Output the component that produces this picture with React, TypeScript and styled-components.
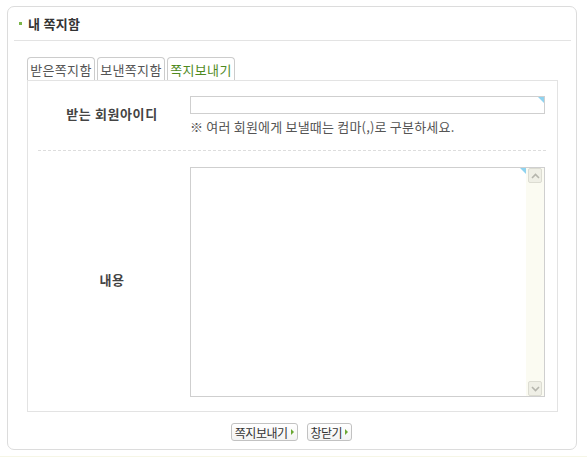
import styled, { createGlobalStyle } from 'styled-components';

const GlobalStyle = createGlobalStyle`
	html, body {
		margin: 0;
		padding: 0;
		background: #ffffff;
	}
	body {
		font-family: 'Noto Sans CJK KR', 'Noto Sans', sans-serif;
		font-size: 12px;
		color: #555555;
	}
`;

const tabs = ['받은쪽지함', '보낸쪽지함', '쪽지보내기'];

const App = () => {
	return (
		<>
			<GlobalStyle />
			<Page>
				<Box>
					<Header>
						<Bullet />
						<Title>내 쪽지함</Title>
					</Header>
					<Body>
						<Tabs>
							{tabs.map((t, i) => (
								<Tab key={t} isActive={i === 2}>
									{t}
								</Tab>
							))}
						</Tabs>
						<Panel>
							<Row divider>
								<Label>받는 회원아이디</Label>
								<Field>
									<InputBox>
										<Corner />
									</InputBox>
									<Help>※ 여러 회원에게 보낼때는 컴마(,)로 구분하세요.</Help>
								</Field>
							</Row>
							<Row>
								<Label>내용</Label>
								<Field>
									<AreaBox>
										<AreaText>
											<Corner />
										</AreaText>
										<ScrollBar>
											<ScrollBtn>
												<svg width="9" height="6" viewBox="0 0 9 6">
													<path d="M1 5 L4.5 1.5 L8 5" stroke="#b5b5ad" strokeWidth="1.6" fill="none" />
												</svg>
											</ScrollBtn>
											<ScrollBtn>
												<svg width="9" height="6" viewBox="0 0 9 6">
													<path d="M1 1 L4.5 4.5 L8 1" stroke="#b5b5ad" strokeWidth="1.6" fill="none" />
												</svg>
											</ScrollBtn>
										</ScrollBar>
									</AreaBox>
								</Field>
							</Row>
						</Panel>
						<Buttons>
							<Button>
								쪽지보내기
								<Arrow />
							</Button>
							<Button>
								창닫기
								<Arrow />
							</Button>
						</Buttons>
					</Body>
				</Box>
				<Strip />
			</Page>
		</>
	);
};

const Page = styled.div`
	width: 587px;
	padding-top: 6px;
`;

const Box = styled.div`
	width: 570px;
	height: 444px;
	box-sizing: border-box;
	margin-left: 7px;
	border: 1px solid #dcdcdc;
	border-radius: 7px;
	padding: 0 5px 0 6px;
`;

const Header = styled.div`
	height: 33px;
	display: flex;
	align-items: center;
	padding-left: 5px;
	border-bottom: 1px solid #e3e3e3;
`;

const Bullet = styled.span`
	width: 3px;
	height: 3px;
	background: #7bb54a;
	margin-right: 6px;
`;

const Title = styled.div`
	font-weight: 700;
	font-size: 13px;
	line-height: 14px;
	letter-spacing: 0.3px;
	color: #333333;
`;

const Body = styled.div`
	padding: 16px 13px 0 13px;
`;

const Tabs = styled.div`
	display: flex;
	gap: 2px;
`;

const Tab = styled.div<{ isActive: boolean }>`
	width: 68px;
	height: 23px;
	box-sizing: border-box;
	border: 1px solid #cccccc;
	border-bottom: none;
	border-radius: 4px 4px 0 0;
	display: flex;
	align-items: center;
	justify-content: center;
	font-size: 13px;
	letter-spacing: 0.3px;
	color: ${({ isActive }) => (isActive ? '#4f8a1e' : '#555555')};
	padding-top: 1px;
`;

const Panel = styled.div`
	border: 1px solid #e3e3e3;
	padding: 0 11px 0 10px;
`;

const Row = styled.div<{ divider?: boolean }>`
	display: grid;
	grid-template-columns: 152px 355px;
	align-items: center;
	padding: ${({ divider }) => (divider ? '15px 0 15px' : '16px 0 14px')};
	border-bottom: ${({ divider }) => (divider ? '1px dashed #dddddd' : 'none')};
`;

const Label = styled.div`
	text-align: center;
	font-weight: 700;
	font-size: 13px;
	line-height: 14px;
	letter-spacing: 0.6px;
	color: #444444;
	padding: 0 4px 4px 0;
`;

const Field = styled.div`
	display: flex;
	flex-direction: column;
`;

const InputBox = styled.div`
	position: relative;
	height: 18px;
	box-sizing: border-box;
	border: 1px solid #cfcfcf;
	background: #ffffff;
`;

const Corner = styled.span`
	position: absolute;
	top: 0;
	right: 0;
	width: 0;
	height: 0;
	border-top: 6px solid #8fd3f0;
	border-left: 6px solid transparent;
`;

const Help = styled.div`
	margin-top: 5px;
	font-size: 13px;
	line-height: 16px;
	color: #555555;
	letter-spacing: 0.2px;
`;

const AreaBox = styled.div`
	height: 230px;
	box-sizing: border-box;
	border: 1px solid #cfcfcf;
	display: flex;
`;

const AreaText = styled.div`
	position: relative;
	flex: 1;
`;

const ScrollBar = styled.div`
	width: 16px;
	background: #fbfbf2;
	display: flex;
	flex-direction: column;
	justify-content: space-between;
	align-items: center;
	padding: 0 1px 0 1px;
`;

const ScrollBtn = styled.div`
	width: 14px;
	height: 15px;
	box-sizing: border-box;
	border: 1px solid #dcdcd2;
	border-radius: 2px;
	background: #efefe6;
	display: flex;
	align-items: center;
	justify-content: center;
`;

const Buttons = styled.div`
	display: flex;
	justify-content: center;
	gap: 9px;
	margin-top: 11px;
	padding-right: 2px;
`;

const Button = styled.div`
	height: 18px;
	box-sizing: border-box;
	border: 1px solid #c2c2c2;
	border-radius: 3px;
	background: linear-gradient(#ffffff, #f3f3f3);
	display: flex;
	align-items: center;
	gap: 3px;
	padding: 0 3px 0 3px;
	font-size: 12px;
	color: #333333;
	letter-spacing: -0.5px;
`;

const Arrow = styled.span`
	width: 0;
	height: 0;
	border-left: 3px solid #6aa833;
	border-top: 3px solid transparent;
	border-bottom: 3px solid transparent;
`;

const Strip = styled.div`
	margin-top: 6px;
	height: 2px;
	background: #f6f6e6;
`;

export default App;
